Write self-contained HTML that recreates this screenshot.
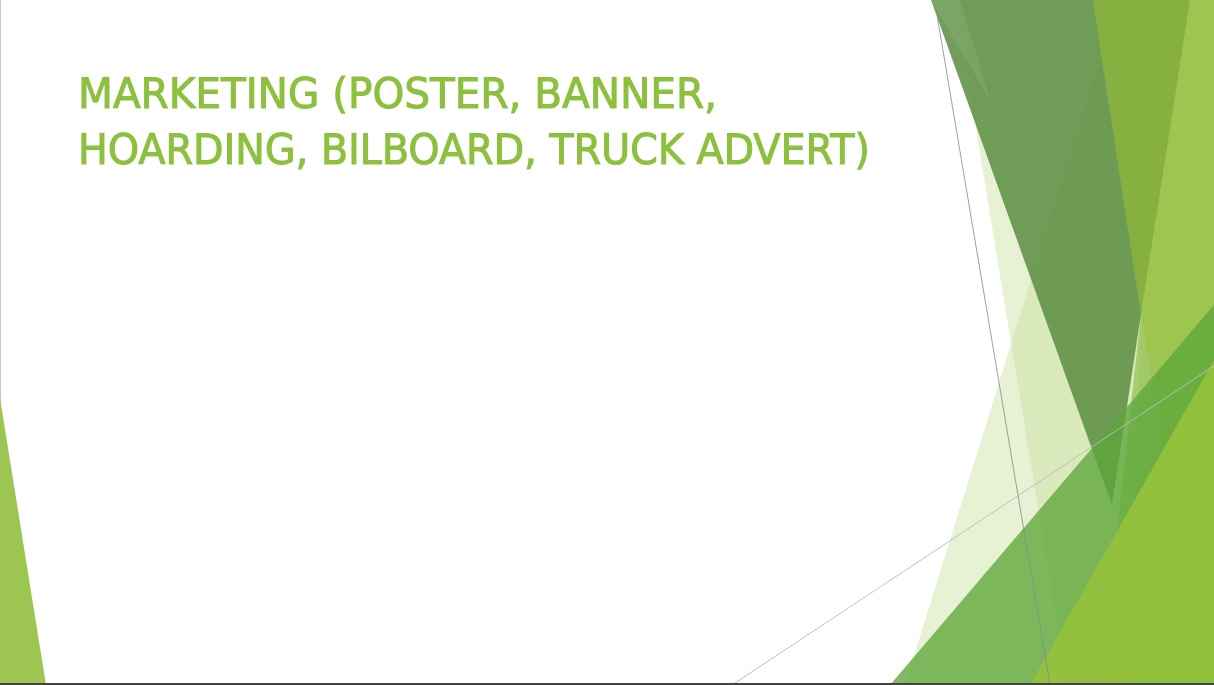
<!DOCTYPE html>
<html><head><meta charset="utf-8"><style>
html,body{margin:0;padding:0;background:#fff;}
body{width:1214px;height:685px;overflow:hidden;position:relative;}
svg{position:absolute;left:0;top:0;}
</style></head><body>
<svg width="1214" height="685" viewBox="0 0 1214 685" xmlns="http://www.w3.org/2000/svg">
<rect x="0" y="0" width="1214" height="685" fill="#fff"/>
<rect x="0" y="0" width="1" height="685" fill="#c8c8c8"/>
<polygon points="0,398 0,685 46,685" fill="#9dc552"/>
<!-- pale shapes -->
<polygon points="955,0 1110,0 1214,685 1067,685" fill="#c9e1a0" opacity="0.45"/>
<polygon points="1118,0 1214,0 1214,685 905,685" fill="#c9e1a0" opacity="0.45"/>
<!-- right light base -->
<polygon points="1093,0 1214,0 1214,685 1125,685 1141,314" fill="#9dc54f"/>
<polygon points="1141,314 1163,450 1125,685 1100,685" fill="#a3c96a" opacity="0.9"/>
<!-- mid green triangle -->
<polygon points="1093,0 1190,0 1141,314" fill="#86b03f"/>
<!-- dark band -->
<polygon points="931,0 1093,0 1141,314 1112,505" fill="#5f8f45" opacity="0.88"/>
<polygon points="931,0 960,0 990,100" fill="#ffffff" opacity="0.08"/>
<!-- lower green -->
<polygon points="1214,305 1214,685 890,685" fill="#5ea63a" opacity="0.78"/>
<!-- yellow green -->
<polygon points="1214,360 1214,685 1030,685" fill="#93c13d" opacity="0.95"/>
<line x1="937" y1="15" x2="1050" y2="685" stroke="#8a8a8a" stroke-width="1" opacity="0.8"/>
<line x1="732" y1="685" x2="1214" y2="366" stroke="#bdbdbd" stroke-width="0.8"/>
<rect x="0" y="683" width="1214" height="2" fill="#444"/>
<g font-family="'DejaVu Sans','Liberation Sans',sans-serif" font-size="42" fill="#8dc03f" stroke="#8dc03f" stroke-width="1.1">
<text x="78" y="108" textLength="639" lengthAdjust="spacingAndGlyphs">MARKETING (POSTER, BANNER,</text>
<text x="78" y="164" textLength="792" lengthAdjust="spacingAndGlyphs">HOARDING, BILBOARD, TRUCK ADVERT)</text>
</g>
</svg>
</body></html>
